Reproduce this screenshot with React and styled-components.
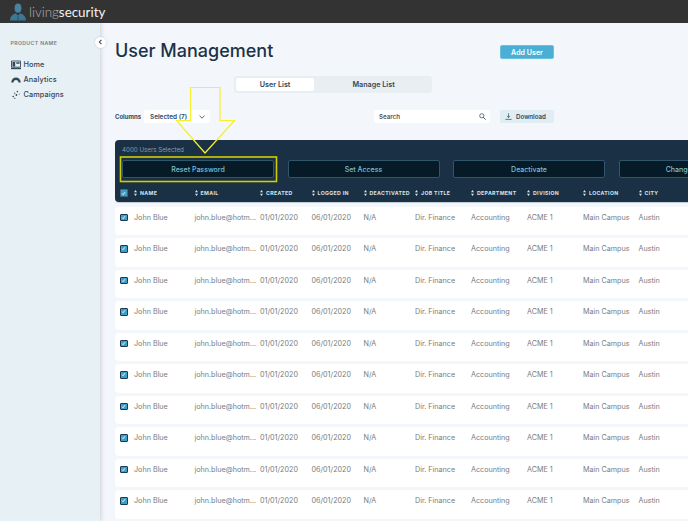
import styled, { createGlobalStyle } from 'styled-components';

const GlobalStyle = createGlobalStyle`
	html, body {
		margin: 0;
		padding: 0;
	}
	body {
		font-family: 'Inter', 'Liberation Sans', sans-serif;
		background: #f3f6fa;
	}
	* {
		box-sizing: border-box;
	}
`;

const COLUMN_GRID = '14px 60.5px 65.5px 51.5px 52px 51.5px 56px 56px 56px 55.5px 60px';

const Page = styled.div`
	position: relative;
	width: 688px;
	height: 521px;
	overflow: hidden;
	display: flex;
	flex-direction: column;
`;

const Header = styled.header`
	flex: none;
	height: 23px;
	background: #333333;
	display: flex;
	align-items: center;
	gap: 2px;
	padding-left: 9px;
`;

const LogoText = styled.div`
	font-family: 'Lato', sans-serif;
	font-size: 13.4px;
	line-height: 23px;
	color: #b4b4b4;
	font-weight: 300;
	padding-top: 2px;
	span {
		color: #f2f2f2;
		font-weight: 400;
	}
`;

const Body = styled.div`
	flex: 1;
	display: flex;
	min-height: 0;
`;

const Sidebar = styled.aside`
	position: relative;
	flex: none;
	width: 100px;
	background: #e7f0f4;
	box-shadow: 1px 0 4px rgba(60, 80, 100, 0.22);
	padding: 16px 0 0 10.5px;
	z-index: 2;
`;

const ProductName = styled.div`
	font-size: 5.2px;
	line-height: 8px;
	font-weight: 600;
	letter-spacing: 0.35px;
	color: #75808a;
	margin-bottom: 10px;
`;

const NavItem = styled.div`
	display: flex;
	align-items: center;
	gap: 3px;
	height: 15px;
	font-size: 7.3px;
	font-weight: 500;
	letter-spacing: 0.1px;
	color: #33475a;
`;

const NavIcon = styled.svg`
	width: 10px;
	height: 10px;
	flex: none;
`;

const CollapseButton = styled.div`
	position: absolute;
	top: 13.5px;
	left: 94.5px;
	width: 11px;
	height: 11px;
	border-radius: 50%;
	background: #ffffff;
	display: flex;
	align-items: center;
	justify-content: center;
	box-shadow: 0 0 2px rgba(60, 80, 100, 0.25);
`;

const Main = styled.main`
	flex: 1;
	min-width: 0;
	overflow: hidden;
	padding: 15px 0 0 15px;
	background: #f3f6fa;
`;

const TitleRow = styled.div`
	width: 439px;
	height: 23px;
	display: flex;
	align-items: center;
	justify-content: space-between;
`;

const Title = styled.h1`
	margin: 0;
	padding-top: 1px;
	font-size: 18px;
	line-height: 23px;
	font-weight: 500;
	color: #1c3246;
`;

const PrimaryButton = styled.button`
	width: 54px;
	height: 14px;
	margin-top: 5px;
	padding: 0;
	border: 1px solid #6fc0de;
	border-radius: 2px;
	background: #4bafd5;
	color: #ffffff;
	font-family: inherit;
	font-size: 7.1px;
	font-weight: 600;
`;

const Tabs = styled.div`
	display: flex;
	width: 198px;
	height: 17px;
	margin: 15px 0 0 119px;
	padding: 2px;
	border-radius: 3px;
	background: #e9eef2;
`;

const Tab = styled.div`
	width: ${(p) => (p.$active ? '79px' : '117px')};
	height: 13px;
	display: flex;
	align-items: center;
	justify-content: center;
	padding-left: ${(p) => (p.$active ? '0' : '3px')};
	border-radius: 2px;
	font-size: 7.2px;
	font-weight: 600;
	color: #33475a;
	background: ${(p) => (p.$active ? '#ffffff' : 'transparent')};
`;

const FilterRow = styled.div`
	width: 439px;
	height: 13px;
	margin-top: 17px;
	display: flex;
	align-items: center;
`;

const FilterLabel = styled.span`
	width: 29px;
	font-size: 6px;
	font-weight: 700;
	color: #33475a;
`;

const Select = styled.div`
	width: 66px;
	height: 13px;
	padding: 0 5px 0 6px;
	display: flex;
	align-items: center;
	justify-content: space-between;
	background: #ffffff;
	border-radius: 2px;
	font-size: 6.4px;
	font-weight: 600;
	color: #33475a;
`;

const SearchBox = styled.div`
	width: 116px;
	height: 13px;
	margin-left: auto;
	padding: 0 4px 0 5px;
	display: flex;
	align-items: center;
	justify-content: space-between;
	background: #ffffff;
	border-radius: 2px;
	font-size: 6.2px;
	font-weight: 600;
	color: #45566a;
`;

const DownloadButton = styled.div`
	width: 54px;
	height: 13px;
	margin-left: 10px;
	padding-left: 5px;
	display: flex;
	align-items: center;
	gap: 4px;
	background: #e0edf3;
	border-radius: 2px;
	font-size: 6.2px;
	font-weight: 600;
	color: #33475a;
`;

const Panel = styled.section`
	width: 640px;
	height: 62px;
	margin-top: 17px;
	padding-top: 5px;
	background: #1a3044;
	border-radius: 4px 0 0 4px;
	box-shadow: 0 1px 0 #c3ced6;
`;

const SelectedCount = styled.div`
	height: 10px;
	padding-left: 7px;
	font-size: 6.2px;
	line-height: 10px;
	color: #8d9ba8;
`;

const ActionRow = styled.div`
	display: flex;
	gap: 13.5px;
	margin-top: 5px;
	padding-left: 7px;
`;

const ActionButton = styled.button`
	flex: none;
	width: 152px;
	height: 18px;
	padding: 0;
	border: 1px solid #2f566b;
	border-radius: 2px;
	background: #061a28;
	color: #7fc0d6;
	font-family: inherit;
	font-size: 7px;
	font-weight: 500;
	white-space: nowrap;
`;

const HeadRow = styled.div`
	display: grid;
	grid-template-columns: ${COLUMN_GRID};
	align-items: center;
	margin-top: 8px;
	padding-left: 5px;
	height: 14px;
`;

const HeadCell = styled.div`
	display: flex;
	align-items: center;
	gap: 3px;
	font-size: 5.2px;
	font-weight: 700;
	letter-spacing: 0.35px;
	color: #d9e2e8;
	white-space: nowrap;
`;

const Rows = styled.div`
	display: flex;
	flex-direction: column;
	gap: 3px;
	width: 640px;
	margin-top: 4.7px;
`;

const Row = styled.div`
	display: grid;
	grid-template-columns: ${COLUMN_GRID};
	flex: none;
	height: 28.5px;
	padding: 7px 0 0 5px;
	background: #ffffff;
	border-radius: 4px 0 0 4px;
	font-size: 7.2px;
	line-height: 8px;
	color: #777c80;
	white-space: nowrap;
`;

const Checkbox = styled.div`
	width: 7.5px;
	height: 7.5px;
	display: flex;
	align-items: center;
	justify-content: center;
	border: 1.2px solid ${(p) => (p.$onDark ? '#41687e' : '#1f3a50')};
	border-radius: 1px;
	background: #3d9fc6;
`;

const Annotation = styled.svg`
	position: absolute;
	left: 0;
	top: 0;
	width: 688px;
	height: 521px;
	pointer-events: none;
	z-index: 3;
`;

const COLUMNS = ['Name', 'Email', 'Created', 'Logged In', 'Deactivated', 'Job Title', 'Department', 'Division', 'Location', 'City'];
const ROW_VALUES = ['John Blue', 'john.blue@hotm...', '01/01/2020', '06/01/2020', 'N/A', 'Dir. Finance', 'Accounting', 'ACME 1', 'Main Campus', 'Austin'];
const ACTIONS = ['Reset Password', 'Set Access', 'Deactivate', 'Change Manager'];
const ROW_IDS = [1, 2, 3, 4, 5, 6, 7, 8, 9, 10];

const Tick = () => (
	<svg width="5" height="5" viewBox="0 0 5 5">
		<path d="M1 2.6 L2.1 3.7 L4 1.2" fill="none" stroke="#ffffff" strokeWidth="0.9" />
	</svg>
);

const SortIcon = () => (
	<svg width="3" height="6" viewBox="0 0 3 6">
		<path d="M1.5 0 L3 2.3 H0 Z M1.5 6 L3 3.7 H0 Z" fill="#d9e2e8" />
	</svg>
);

const LogoMark = () => (
	<svg width="18" height="18" viewBox="0 0 18 18">
		<ellipse cx="9" cy="5.2" rx="3.4" ry="4.6" fill="#4a83a0" />
		<path d="M1 17.5 C1.2 13 3.6 11.4 6.6 10.2 L9 12.4 L11.4 10.2 C14.4 11.4 16.8 13 17 17.5 Z" fill="#3c7795" />
		<path d="M8.5 12.6 H9.5 L10 17.5 H8 Z" fill="#2d5f79" />
	</svg>
);

const HomeIcon = () => (
	<NavIcon viewBox="0 0 10 10">
		<path d="M0.5 1 H9.5 V7.2 H0.5 Z" fill="none" stroke="#33475a" strokeWidth="0.9" />
		<path d="M1.5 2 H4.2 V6.4 H1.5 Z M5.3 2.2 H8.6 V3.8 H5.3 Z" fill="#33475a" />
		<path d="M0 7.8 H10 V9.2 H0 Z" fill="#33475a" />
	</NavIcon>
);

const AnalyticsIcon = () => (
	<NavIcon viewBox="0 0 10 10">
		<path d="M0.2 7.6 C0.6 4.2 2.6 2.6 5 2.6 C7.4 2.6 9.4 4.2 9.8 7.6 H7.6 C7.2 5.8 6.3 5 5 5 C3.7 5 2.8 5.8 2.4 7.6 Z" fill="#33475a" />
	</NavIcon>
);

const CampaignsIcon = () => (
	<NavIcon viewBox="0 0 10 10">
		<circle cx="6.4" cy="1.6" r="0.8" fill="#33475a" />
		<circle cx="3.6" cy="3.2" r="0.7" fill="#5d6d7c" />
		<circle cx="8.4" cy="4" r="0.6" fill="#5d6d7c" />
		<circle cx="5.4" cy="5" r="0.9" fill="#33475a" />
		<circle cx="2.2" cy="6.6" r="0.8" fill="#33475a" />
		<circle cx="3.8" cy="8.4" r="0.7" fill="#5d6d7c" />
	</NavIcon>
);

const App = () => {
	return (
		<Page>
			<GlobalStyle />
			<Header>
				<LogoMark />
				<LogoText>
					living<span>security</span>
				</LogoText>
			</Header>
			<Body>
				<Sidebar>
					<ProductName>PRODUCT NAME</ProductName>
					<NavItem>
						<HomeIcon />
						Home
					</NavItem>
					<NavItem>
						<AnalyticsIcon />
						Analytics
					</NavItem>
					<NavItem>
						<CampaignsIcon />
						Campaigns
					</NavItem>
					<CollapseButton>
						<svg width="5" height="6" viewBox="0 0 5 6">
							<path d="M3.4 0.8 L1.4 3 L3.4 5.2" fill="none" stroke="#33475a" strokeWidth="1.1" />
						</svg>
					</CollapseButton>
				</Sidebar>
				<Main>
					<TitleRow>
						<Title>User Management</Title>
						<PrimaryButton>Add User</PrimaryButton>
					</TitleRow>
					<Tabs>
						<Tab $active>User List</Tab>
						<Tab>Manage List</Tab>
					</Tabs>
					<FilterRow>
						<FilterLabel>Columns</FilterLabel>
						<Select>
							Selected (7)
							<svg width="6" height="4" viewBox="0 0 6 4">
								<path d="M0.5 0.6 L3 3.2 L5.5 0.6" fill="none" stroke="#33475a" strokeWidth="0.8" />
							</svg>
						</Select>
						<SearchBox>
							Search
							<svg width="7" height="7" viewBox="0 0 7 7">
								<circle cx="2.8" cy="2.8" r="2.1" fill="none" stroke="#45566a" strokeWidth="0.8" />
								<path d="M4.4 4.4 L6.6 6.6" stroke="#45566a" strokeWidth="1" />
							</svg>
						</SearchBox>
						<DownloadButton>
							<svg width="7" height="7" viewBox="0 0 7 7">
								<path d="M3.5 0.4 V4.4 M1.9 3 L3.5 4.6 L5.1 3 M0.4 6.4 H6.6" fill="none" stroke="#33475a" strokeWidth="0.7" />
							</svg>
							Download
						</DownloadButton>
					</FilterRow>
					<Panel>
						<SelectedCount>4000 Users Selected</SelectedCount>
						<ActionRow>
							{ACTIONS.map((action) => (
								<ActionButton key={action}>{action}</ActionButton>
							))}
						</ActionRow>
						<HeadRow>
							<Checkbox $onDark>
								<Tick />
							</Checkbox>
							{COLUMNS.map((column) => (
								<HeadCell key={column}>
									<SortIcon />
									{column.toUpperCase()}
								</HeadCell>
							))}
						</HeadRow>
					</Panel>
					<Rows>
						{ROW_IDS.map((id) => (
							<Row key={id}>
								<Checkbox>
									<Tick />
								</Checkbox>
								{ROW_VALUES.map((value) => (
									<div key={value}>{value}</div>
								))}
							</Row>
						))}
					</Rows>
				</Main>
			</Body>
			{/* yellow callout drawn on top of the screenshot */}
			<Annotation viewBox="0 0 688 521">
				<path d="M190.5 87.5 H220 V120.5 H234.5 L205 153 L176.5 120.5 H190.5 Z" fill="none" stroke="#f7f02c" strokeWidth="1.2" />
				<rect x="120.5" y="157" width="156" height="24.5" fill="none" stroke="#cfce00" strokeWidth="1.6" />
			</Annotation>
		</Page>
	);
};

export default App;
